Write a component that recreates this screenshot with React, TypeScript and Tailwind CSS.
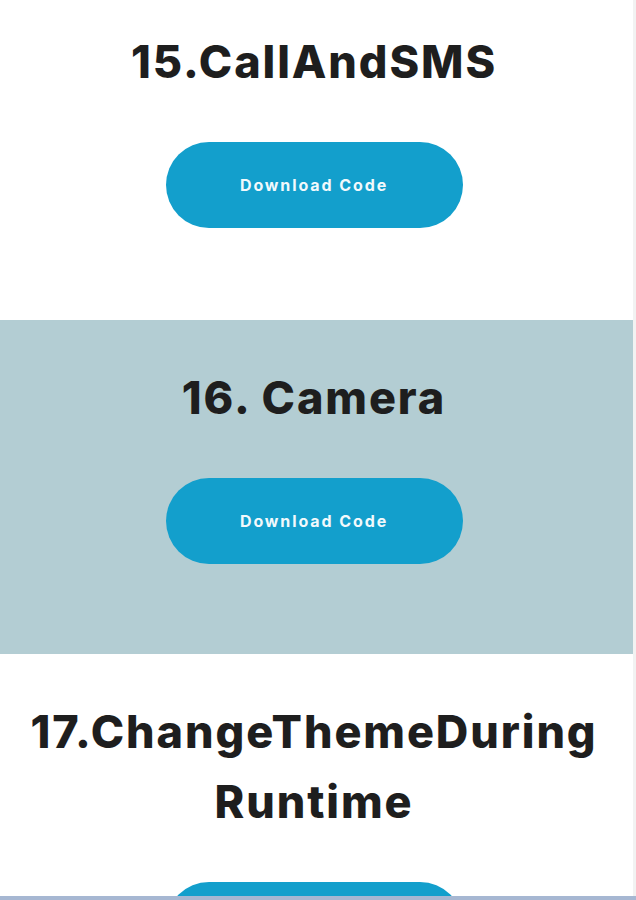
const sections = [
  { title: "15.CallAndSMS", bg: "bg-white", lines: ["15.CallAndSMS"] },
  { title: "16. Camera", bg: "bg-[#b3cdd3]", lines: ["16. Camera"] },
  {
    title: "17.ChangeThemeDuringRuntime",
    bg: "bg-white",
    lines: ["17.ChangeThemeDuring", "Runtime"],
  },
];

const DownloadButton = () => (
  <button className="w-[297px] h-[86px] rounded-full bg-[#139fcc] text-[#f2f9fc] text-[16px] font-bold tracking-[1.9px]">
    Download Code
  </button>
);

export default function App() {
  return (
    <div className="h-[900px] w-full overflow-hidden flex flex-col bg-white font-['Inter','Roboto',sans-serif]">
      <div className="flex-1 min-h-0 flex overflow-hidden">
        <div className="flex-1 -mt-[16px]">
          {sections.map((s, i) => (
            <section
              key={s.title}
              className={`${s.bg} flex flex-col items-center pt-[43px] pr-[5px] ${
                i === 0 ? "pb-[92px]" : "pb-[90px]"
              }`}
            >
              <h2 className="text-[45px] leading-[70px] font-extrabold text-[#1e1e1e] text-center tracking-[1.9px]">
                {s.lines.map((l) => (
                  <div key={l}>{l}</div>
                ))}
              </h2>
              <div className="mt-[45px]">
                <DownloadButton />
              </div>
            </section>
          ))}
        </div>
        <div className="w-[3px] bg-[#f2f2f2]" />
      </div>
      <div className="h-[4px] bg-[#a6b7d2]" />
    </div>
  );
}
